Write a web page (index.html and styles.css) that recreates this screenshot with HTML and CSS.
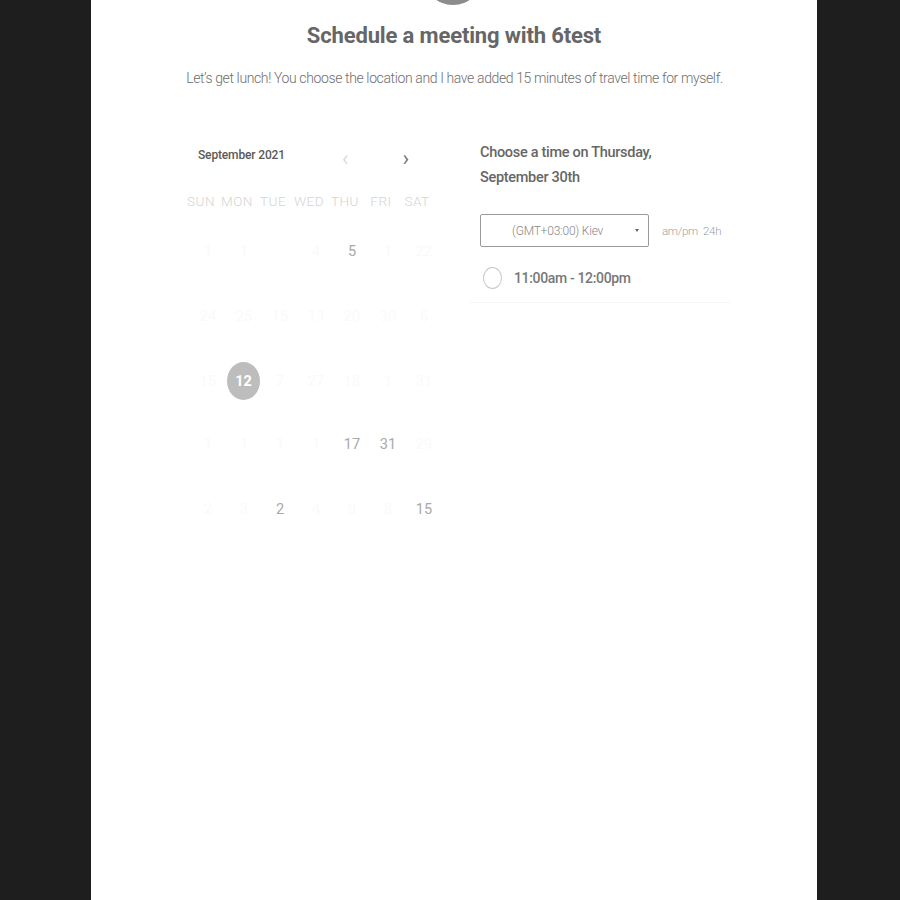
FILE: index.html
```html
<!DOCTYPE html>
<html>
<head>
<meta charset="utf-8">
<link rel="stylesheet" href="styles.css">
</head>
<body>
<div class="page">
  <div class="avatar"></div>
  <h1 class="title">Schedule a meeting with 6test</h1>
  <p class="subtitle">Let’s get lunch! You choose the location and I have added 15 minutes of travel time for myself.</p>
  <div class="main">
    <div class="calendar">
      <div class="cal-head">
        <span class="month">September 2021</span>
        <span class="nav prev">‹</span>
        <span class="nav next">›</span>
      </div>
      <div class="weekdays">
        <span>SUN</span><span>MON</span><span>TUE</span><span>WED</span><span>THU</span><span>FRI</span><span>SAT</span>
      </div>
      <div class="days">
        <span class="f">1</span><span class="f">1</span><span class="f"></span><span class="f">4</span><span class="d">5</span><span class="f">1</span><span class="f">22</span>
        <span class="f">24</span><span class="f">25</span><span class="f">15</span><span class="f">13</span><span class="f">20</span><span class="f">30</span><span class="f">6</span>
        <span class="f">15</span><span class="sel">12</span><span class="f">7</span><span class="f">27</span><span class="f">18</span><span class="f">1</span><span class="f">31</span>
        <span class="f">1</span><span class="f">1</span><span class="f">1</span><span class="f">1</span><span class="d">17</span><span class="d">31</span><span class="f">29</span>
        <span class="f">2</span><span class="f">3</span><span class="d">2</span><span class="f">4</span><span class="f">9</span><span class="f">8</span><span class="d">15</span>
      </div>
    </div>
    <div class="times">
      <div class="choose">Choose a time on Thursday,<br>September 30th</div>
      <div class="tz-row">
        <div class="select"><span>(GMT+03:00) Kiev</span><span class="caret"></span></div>
        <span class="fmt">am/pm&nbsp; 24h</span>
      </div>
      <div class="slot">
        <span class="radio"></span>
        <span class="slot-text">11:00am - 12:00pm</span>
      </div>
    </div>
  </div>
</div>
</body>
</html>
```
FILE: styles.css
```css
html, body {
  margin: 0;
  padding: 0;
  background: #1e1e1e;
  height: 100%;
}
body {
  font-family: Roboto, "Liberation Sans", sans-serif;
  overflow: hidden;
}
.page {
  width: 726px;
  margin-left: 91px;
  height: 900px;
  background: #ffffff;
  display: flex;
  flex-direction: column;
  align-items: center;
}
.avatar {
  width: 60px;
  height: 60px;
  border-radius: 50%;
  background: #8c8c8c;
  margin-top: -55px;
  margin-left: -2px;
  flex: none;
}
.title {
  margin: 17px 0 0 0;
  font-size: 22px;
  font-weight: 700;
  color: #666;
  line-height: 28px;
  letter-spacing: -0.15px;
}
.subtitle {
  margin: 18px 0 0 0;
  font-size: 14px;
  font-weight: 300;
  color: #6e6e6e;
  line-height: 20px;
  margin-left: 1px;
  letter-spacing: -0.38px;
}
.main {
  display: flex;
  align-self: flex-start;
  margin-left: 92px;
  margin-top: 52px;
}
.calendar {
  width: 252px;
}
.cal-head {
  display: flex;
  align-items: center;
  height: 30px;
}
.month {
  font-size: 12px;
  font-weight: 500;
  color: #5a5a5a;
  margin-left: 15px;
  width: 145px;
  letter-spacing: -0.15px;
}
.nav {
  font-size: 22px;
  line-height: 22px;
  margin-top: 7px;
}
.prev {
  color: #d0d0d0;
  font-weight: 300;
  margin-left: -1px;
}
.next {
  color: #777;
  margin-left: 54px;
}
.weekdays {
  display: grid;
  grid-template-columns: repeat(7, 36px);
  margin-top: 23px;
  font-size: 13.5px;
  font-weight: 300;
  color: #d4d4d4;
  letter-spacing: 0.5px;
  text-align: center;
}
.weekdays span {
  line-height: 16px;
}
.days {
  display: grid;
  grid-template-columns: repeat(7, 36px);
  grid-auto-rows: 65px;
  margin-top: 25px;
  margin-left: 7px;
  font-size: 14.5px;
}
.days span {
  display: flex;
  align-items: center;
  justify-content: center;
  height: 34px;
  color: #fafafa;
  font-weight: 400;
}
.days span:nth-child(n+22) {
  margin-top: -2px;
}
.days .d {
  color: #a9a9a9;
}
.days .sel {
  width: 33px;
  height: 38px;
  margin: -2px 0 0 1px;
  border-radius: 50%;
  background: #bdbdbd;
  color: #fff;
  font-weight: 700;
}
.times {
  margin-left: 45px;
  width: 250px;
}
.choose {
  font-size: 14.5px;
  font-weight: 500;
  color: #666;
  line-height: 25px;
  margin-top: 0;
  letter-spacing: -0.3px;
}
.tz-row {
  display: flex;
  align-items: center;
  margin-top: 24px;
}
.select {
  width: 167px;
  height: 31px;
  border: 1px solid #9a9a9a;
  border-radius: 2px;
  display: flex;
  align-items: center;
  font-size: 12px;
  color: #888;
  font-weight: 300;
  letter-spacing: -0.2px;
}
.select span:first-child {
  margin-left: 31px;
}
.caret {
  width: 0;
  height: 0;
  border-left: 2.5px solid transparent;
  border-right: 2.5px solid transparent;
  border-top: 3px solid #666;
  margin-left: auto;
  margin-right: 9px;
}
.fmt {
  margin-left: 13px;
  font-size: 11.5px;
  color: #a0a0a0;
  font-weight: 300;
  letter-spacing: -0.3px;
}
.slot {
  display: flex;
  align-items: center;
  margin-left: -10px;
  padding: 0 0 13px 13px;
  margin-top: 20px;
  border-bottom: 1px solid #f5f5f5;
  width: 247px;
}
.radio {
  width: 17px;
  height: 20px;
  border: 1px solid #c8c8c8;
  border-radius: 50%;
  flex: none;
}
.slot-text {
  margin-left: 12px;
  font-size: 14px;
  font-weight: 500;
  color: #777;
  letter-spacing: -0.35px;
}
```
